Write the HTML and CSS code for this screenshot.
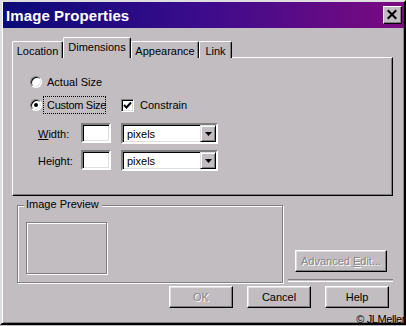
FILE: index.html
```html
<!DOCTYPE html>
<html lang="en">
<head>
    <meta charset="UTF-8">
    <meta name="viewport" content="width=device-width, initial-scale=1.0">
    <title>Image Properties</title>
    <link rel="stylesheet" href="styles.css">
</head>
<body>
<div class="window">
    <div class="titlebar">
        <span class="title">Image Properties</span>
        <button class="close">
            <svg width="19" height="18" viewBox="0 0 19 18">
                <path d="M5 4 L14 13 M14 4 L5 13" stroke="#000" stroke-width="2.2" fill="none"/>
            </svg>
        </button>
    </div>

    <div class="tabs">
        <div class="tab tab-location">Location</div>
        <div class="tab tab-active tab-dimensions">Dimensions</div>
        <div class="tab tab-appearance">Appearance</div>
        <div class="tab tab-link">Link</div>
    </div>

    <div class="panel">
        <div class="row row-actual">
            <span class="radio"></span>
            <span class="label">Actual Size</span>
        </div>
        <div class="row row-custom">
            <span class="radio checked"></span>
            <span class="label focus">Custom Size</span>
            <span class="checkbox">
                <svg width="9" height="9" viewBox="0 0 9 9">
                    <path d="M1 4 L3.5 6.5 L8 1.5" stroke="#000" stroke-width="2" fill="none"/>
                </svg>
            </span>
            <span class="label">Constrain</span>
        </div>
        <div class="row field-row field-width">
            <span class="field-label"><u>W</u>idth:</span>
            <span class="textbox"></span>
            <span class="select">
                <span class="select-value">pixels</span>
                <span class="select-arrow">
                    <svg width="7" height="4" viewBox="0 0 7 4"><path d="M0 0 H7 L3.5 4 Z" fill="#000"/></svg>
                </span>
            </span>
        </div>
        <div class="row field-row field-height">
            <span class="field-label">Height:</span>
            <span class="textbox"></span>
            <span class="select">
                <span class="select-value">pixels</span>
                <span class="select-arrow">
                    <svg width="7" height="4" viewBox="0 0 7 4"><path d="M0 0 H7 L3.5 4 Z" fill="#000"/></svg>
                </span>
            </span>
        </div>
    </div>

    <div class="lower">
        <div class="group">
            <span class="legend">Image Preview</span>
            <div class="preview"></div>
        </div>
        <div class="side">
            <button class="btn btn-advanced" disabled>Advanced <u>E</u>dit...</button>
            <div class="separator"></div>
        </div>
    </div>

    <div class="actions">
        <button class="btn" disabled>OK</button>
        <button class="btn">Cancel</button>
        <button class="btn">Help</button>
    </div>

    <span class="copyright">&copy; JLMeller</span>
</div>
</body>
</html>
```

FILE: styles.css
```css
body{
    margin: 0;
    background-color: #c1bdc1;
    font-family: "Liberation Sans", Arial, sans-serif;
    font-size: 11px;
    color: #000;
    overflow: hidden;
}
.window{
    position: relative;
    width: 406px;
    height: 325px;
    box-sizing: border-box;
    background-color: #c1bdc1;
    border: 2px solid;
    border-color: #dfdfdf #000 #000 #dfdfdf;
    box-shadow: inset 1px 1px #fff, inset -1px -1px #808080;
    padding: 0 0 0 1px;
    display: flex;
    flex-direction: column;
}

/* title bar */
.titlebar{
    height: 26px;
    display: flex;
    align-items: center;
    justify-content: space-between;
    padding-left: 3px;
    padding-right: 2px;
    background: linear-gradient(to right, #0a0a78, #3c0c8c 50%, #7c0a80);
}
.title{
    color: #fff;
    font-weight: bold;
    font-size: 15px;
    letter-spacing: 0.1px;
}
.close{
    width: 19px;
    height: 18px;
    padding: 0;
    margin: 0;
    display: flex;
    background-color: #c1bdc1;
    border: 1px solid;
    border-color: #fff #000 #000 #fff;
    box-shadow: inset -1px -1px #808080;
}
.close svg{
    margin: -1px 0 0 -1px;
}

/* tabs */
.tabs{
    margin-top: 9px;
    margin-left: 9px;
    height: 21px;
    display: flex;
    align-items: flex-end;
    position: relative;
    z-index: 1;
}
.tab{
    height: 17px;
    box-sizing: border-box;
    display: flex;
    align-items: center;
    justify-content: center;
    background-color: #c1bdc1;
    border-top: 1px solid #fff;
    border-left: 1px solid #fff;
    border-right: 1px solid #000;
    box-shadow: inset -1px 0 #808080;
    border-radius: 2px 2px 0 0;
    padding-top: 1px;
}
.tab-location{ width: 51px; }
.tab-dimensions{ width: 68px; }
.tab-appearance{ width: 68px; }
.tab-link{ width: 33px; }
.tab-active{
    height: 21px;
    padding-top: 0;
    padding-bottom: 2px;
}

.panel{
    margin-top: -1px;
    margin-left: 9px;
    width: 381px;
    height: 139px;
    box-sizing: border-box;
    border: 1px solid;
    border-color: #fff #000 #000 #fff;
    box-shadow: inset -1px -1px #808080;
    padding-left: 17px;
    padding-top: 16px;
    display: flex;
    flex-direction: column;
}
.row{
    display: flex;
    align-items: center;
}
.row-actual{
    height: 16px;
}
.row-custom{
    height: 18px;
    margin-top: 6px;
}
.radio{
    width: 12px;
    height: 12px;
    box-sizing: border-box;
    border-radius: 50%;
    background-color: #fff;
    border: 1px solid;
    border-color: #808080 #fff #fff #808080;
    box-shadow: inset 1px 1px #000, inset -1px -1px #dfdfdf;
    display: flex;
    align-items: center;
    justify-content: center;
    margin-right: 5px;
}
.radio.checked::after{
    content: "";
    width: 4px;
    height: 4px;
    border-radius: 50%;
    background-color: #000;
}
.row-custom .radio{
    margin-right: 1px;
}
.focus{
    width: 63px;
    height: 18px;
    box-sizing: border-box;
    border: 1px dotted #000;
    padding: 0 3px;
    display: flex;
    align-items: center;
    white-space: nowrap;
    letter-spacing: -0.3px;
}
.checkbox{
    width: 13px;
    height: 13px;
    box-sizing: border-box;
    background-color: #fff;
    border: 1px solid;
    border-color: #808080 #fff #fff #808080;
    box-shadow: inset 1px 1px #000, inset -1px -1px #dfdfdf;
    display: flex;
    align-items: center;
    justify-content: center;
    margin-left: 15px;
    margin-right: 6px;
}
.label{
    white-space: nowrap;
}

/* width / height fields */
.field-row{
    height: 21px;
    margin-left: 8px;
}
.field-width{
    margin-top: 9px;
}
.field-height{
    margin-top: 6px;
}
.field-label{
    width: 43px;
}
.field-label u{
    text-decoration-thickness: 1px;
}
.textbox,
.select{
    box-sizing: border-box;
    background-color: #fff;
    border: 2px solid;
    border-color: #808080 #fff #fff #808080;
    box-shadow: inset 1px 1px #000, inset -1px -1px #dfdfdf;
}
.textbox{
    width: 30px;
    height: 20px;
    align-self: flex-start;
}
.select{
    width: 97px;
    height: 21px;
    margin-left: 10px;
    display: flex;
    align-items: center;
    justify-content: space-between;
    padding: 0 0 0 4px;
}
.select-arrow{
    width: 16px;
    height: 17px;
    box-sizing: border-box;
    background-color: #c1bdc1;
    border: 1px solid;
    border-color: #dfdfdf #000 #000 #dfdfdf;
    box-shadow: inset 1px 1px #fff, inset -1px -1px #808080;
    display: flex;
    align-items: center;
    justify-content: center;
}

/* lower part */
.lower{
    margin-top: 9px;
    display: flex;
}
.group{
    position: relative;
    margin-left: 14px;
    width: 266px;
    height: 78px;
    box-sizing: border-box;
    border: 1px solid #808080;
    box-shadow: inset 1px 1px #fff, 1px 1px #fff;
}
.legend{
    position: absolute;
    top: -8px;
    left: 6px;
    padding: 0 3px 0 2px;
    line-height: 13px;
    background-color: #c1bdc1;
}
.preview{
    margin-top: 16px;
    margin-left: 8px;
    width: 81px;
    height: 52px;
    box-sizing: border-box;
    border: 1px solid #808080;
    box-shadow: inset 1px 1px #fff, 1px 1px #fff;
}
.side{
    margin-left: 5px;
    width: 105px;
    display: flex;
    flex-direction: column;
}
.btn{
    width: 64px;
    height: 22px;
    box-sizing: border-box;
    padding: 0;
    font-family: "Liberation Sans", Arial, sans-serif;
    font-size: 11px;
    color: #000;
    background-color: #c1bdc1;
    border: 1px solid;
    border-color: #fff #000 #000 #fff;
    box-shadow: inset -1px -1px #808080, inset 1px 1px #dfdfdf;
}
.btn:disabled{
    color: #8a868a;
    text-shadow: 1px 1px #fff;
}
.btn-advanced{
    width: 92px;
    margin-top: 45px;
    margin-left: 7px;
}
.separator{
    margin-top: 7px;
    height: 1px;
    border-top: 1px solid #808080;
    border-bottom: 1px solid #fff;
}
.actions{
    margin-top: 3px;
    display: flex;
    justify-content: flex-end;
    gap: 14px;
    padding-right: 15px;
}
.copyright{
    position: absolute;
    right: -1px;
    bottom: -2px;
    font-size: 11px;
    letter-spacing: -0.4px;
}
```
